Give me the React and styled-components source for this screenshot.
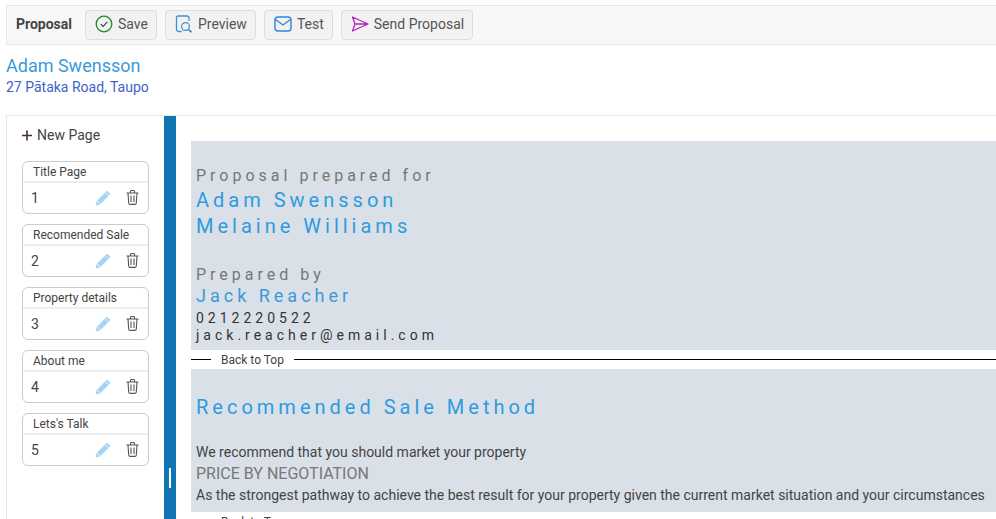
import React from "react";
import styled, { createGlobalStyle } from "styled-components";

const GlobalStyle = createGlobalStyle`
  html, body {
    margin: 0;
    padding: 0;
    background: #fff;
    overflow: hidden;
  }
  body {
    font-family: Roboto, "Liberation Sans", sans-serif;
    color: #333;
  }
`;

const Page = styled.div`
  width: 996px;
  height: 519px;
  overflow: hidden;
  padding: 5px 0 0 6px;
  box-sizing: border-box;
`;

const Toolbar = styled.div`
  display: flex;
  align-items: center;
  gap: 8px;
  width: 1010px;
  height: 40px;
  box-sizing: border-box;
  padding: 0 0 0 9px;
  background: #f8f8f8;
  border: 1px solid #e7e7e7;
`;

const ToolbarTitle = styled.span`
  font-size: 14px;
  font-weight: 700;
  color: #444;
  margin-right: 5px;
  padding-bottom: 2px;
`;

const ToolButton = styled.button`
  display: flex;
  align-items: center;
  gap: 5px;
  height: 30px;
  box-sizing: border-box;
  padding: 0 8px 2px 9px;
  background: #f2f2f2;
  border: 1px solid #ddd;
  border-radius: 4px;
  font-family: inherit;
  font-size: 14px;
  color: #555;
`;

const Client = styled.div`
  padding-top: 10px;
  height: 70px;
  box-sizing: border-box;
`;

const ClientName = styled.div`
  font-size: 18px;
  line-height: 22px;
  color: #3a9ad9;
`;

const ClientAddress = styled.div`
  font-size: 14px;
  line-height: 20px;
  color: #3f62c9;
`;

const Workspace = styled.div`
  display: flex;
  height: 420px;
  border-top: 1px solid #e7e7e7;
  border-left: 1px solid #e7e7e7;
`;

const Sidebar = styled.div`
  width: 157px;
  flex: none;
  box-sizing: border-box;
  padding: 9px 0 0 15px;
`;

const NewPage = styled.div`
  display: flex;
  align-items: center;
  gap: 4px;
  height: 20px;
  margin-left: -1px;
  font-size: 14px;
  color: #444;
  margin-bottom: 16px;
`;

const PageList = styled.div`
  display: flex;
  flex-direction: column;
  gap: 10px;
`;

const PageCard = styled.div`
  width: 127px;
  height: 53px;
  box-sizing: border-box;
  border: 1px solid #ccc;
  border-radius: 6px;
`;

const PageTitle = styled.div`
  height: 21px;
  box-sizing: border-box;
  padding-left: 10px;
  font-size: 12px;
  line-height: 20px;
  color: #444;
  border-bottom: 2px solid #eee;
`;

const PageRow = styled.div`
  display: flex;
  align-items: center;
  height: 29px;
  padding-left: 8px;
  font-size: 14px;
  color: #444;
`;

const PageNumber = styled.span`
  flex: 1;
`;

const PageActions = styled.div`
  display: flex;
  align-items: center;
  gap: 15px;
  padding-right: 9px;
`;

const Splitter = styled.div`
  position: relative;
  width: 12px;
  flex: none;
  background: #1075b0;
`;

const SplitterGrip = styled.div`
  position: absolute;
  top: 352px;
  left: 5px;
  width: 2px;
  height: 20px;
  background: #fff;
`;

const Content = styled.div`
  flex: 1;
  min-width: 0;
  padding-top: 25px;
  padding-left: 15px;
`;

const Panel = styled.div`
  background: #dae0e8;
  box-sizing: border-box;
  height: ${(p) => p.$height}px;
  padding: ${(p) => p.$top}px 0 0 5px;
`;

const SpacedLine = styled.div`
  font-size: ${(p) => p.$size}px;
  line-height: ${(p) => p.$line}px;
  letter-spacing: 4px;
  color: ${(p) => p.$color};
  margin-top: ${(p) => p.$gap || 0}px;
  white-space: nowrap;
`;

const BackToTop = styled.div`
  display: flex;
  align-items: center;
  height: 19px;
  font-size: 12px;
  color: #444;
  &::before {
    content: "";
    width: 20px;
    border-top: 1px solid #000;
    margin-right: 10px;
  }
  &::after {
    content: "";
    flex: 1;
    border-top: 1px solid #000;
    margin-left: 10px;
  }
`;

const BodyText = styled.div`
  font-size: 14px;
  line-height: 22px;
  color: #444;
  white-space: nowrap;
  margin-top: ${(p) => p.$gap || 0}px;
`;

const Emphasis = styled.div`
  font-size: 16px;
  line-height: 21px;
  color: #777;
`;

const CheckIcon = () => (
  <svg width="18" height="18" viewBox="0 0 18 18" fill="none">
    <circle cx="9" cy="9" r="7.8" stroke="#1a8a2a" strokeWidth="1.3" />
    <path d="M5.8 9.2l2.3 2.3 4.2-4.6" stroke="#333" strokeWidth="1.1" />
  </svg>
);

const PreviewIcon = () => (
  <svg width="18" height="18" viewBox="0 0 18 18" fill="none">
    <path d="M6.5 16.5H3.5a2 2 0 0 1-2-2v-12a1.5 1.5 0 0 1 1.5-1.5h9a2 2 0 0 1 2 2v3" stroke="#3b92d6" strokeWidth="1.3" />
    <circle cx="10.5" cy="11.5" r="3.9" stroke="#3b92d6" strokeWidth="1.2" />
    <path d="M13.5 14.5l3 2.8" stroke="#2b6f9c" strokeWidth="1.3" />
  </svg>
);

const MailIcon = () => (
  <svg width="18" height="16" viewBox="0 0 18 16" fill="none">
    <rect x="1" y="1" width="16" height="14" rx="3" stroke="#2f86d6" strokeWidth="1.4" />
    <path d="M1.5 3.5L9 9l7.5-5.5" stroke="#2f86d6" strokeWidth="1.4" />
  </svg>
);

const SendIcon = () => (
  <svg width="18" height="16" viewBox="0 0 18 16" fill="none">
    <path d="M1.5 1l15.5 7-15.5 7 2.5-7zM4 8h13" stroke="#b61fc0" strokeWidth="1.3" strokeLinejoin="round" />
  </svg>
);

const PlusIcon = () => (
  <svg width="12" height="12" viewBox="0 0 12 12">
    <path d="M1 6.5h10M6 1.5v10" stroke="#4a3030" strokeWidth="1.6" />
  </svg>
);

const PencilIcon = () => (
  <svg width="16" height="16" viewBox="0 0 15 15">
    <path d="M0.5 14.5l1-4.2L10.6 1.2a1 1 0 0 1 1.4 0l1.8 1.8a1 1 0 0 1 0 1.4L4.7 13.5z" fill="#a5d3f5" />
    <path d="M1.8 10l3.2 3.2M9.6 2.4l3 3" stroke="#fff" strokeWidth="0.7" />
  </svg>
);

const TrashIcon = () => (
  <svg width="13" height="15" viewBox="0 0 13 15" fill="none" stroke="#555" strokeWidth="1.1">
    <path d="M0.5 3h12M4.5 3V1.5a1 1 0 0 1 1-1h2a1 1 0 0 1 1 1V3" />
    <path d="M2 3l.7 10a1.5 1.5 0 0 0 1.5 1.4h4.6a1.5 1.5 0 0 0 1.5-1.4L11 3" />
    <path d="M5 5.5v6.5M8 5.5v6.5" />
  </svg>
);

const pages = ["Title Page", "Recomended Sale", "Property details", "About me", "Lets's Talk"];

const App = () => (
  <Page>
    <GlobalStyle />
    <Toolbar>
      <ToolbarTitle>Proposal</ToolbarTitle>
      <ToolButton>
        <CheckIcon />
        Save
      </ToolButton>
      <ToolButton>
        <PreviewIcon />
        Preview
      </ToolButton>
      <ToolButton>
        <MailIcon />
        Test
      </ToolButton>
      <ToolButton>
        <SendIcon />
        Send Proposal
      </ToolButton>
    </Toolbar>
    <Client>
      <ClientName>Adam Swensson</ClientName>
      <ClientAddress>27 Pātaka Road, Taupo</ClientAddress>
    </Client>
    <Workspace>
      <Sidebar>
        <NewPage>
          <PlusIcon />
          New Page
        </NewPage>
        <PageList>
          {pages.map((title, i) => (
            <PageCard key={title}>
              <PageTitle>{title}</PageTitle>
              <PageRow>
                <PageNumber>{i + 1}</PageNumber>
                <PageActions>
                  <PencilIcon />
                  <TrashIcon />
                </PageActions>
              </PageRow>
            </PageCard>
          ))}
        </PageList>
      </Sidebar>
      <Splitter>
        <SplitterGrip />
      </Splitter>
      <Content>
        <Panel $height={209} $top={25}>
          <SpacedLine $size={16} $line={20} $color="#777">Proposal prepared for</SpacedLine>
          <SpacedLine $size={20} $line={26} $color="#2f9ae0" $gap={1}>Adam Swensson</SpacedLine>
          <SpacedLine $size={20} $line={26} $color="#2f9ae0">Melaine Williams</SpacedLine>
          <SpacedLine $size={16} $line={20} $color="#777" $gap={26}>Prepared by</SpacedLine>
          <SpacedLine $size={18} $line={22} $color="#3a9ad9">Jack Reacher</SpacedLine>
          <SpacedLine $size={14} $line={18} $color="#333" $gap={2}>0212220522</SpacedLine>
          <SpacedLine $size={14} $line={18} $color="#333" $gap={-1}>jack.reacher@email.com</SpacedLine>
        </Panel>
        <BackToTop>Back to Top</BackToTop>
        <Panel $height={143} $top={24}>
          <SpacedLine $size={20} $line={28} $color="#2f9ae0">Recommended Sale Method</SpacedLine>
          <BodyText $gap={20}>We recommend that you should market your property</BodyText>
          <Emphasis>PRICE BY NEGOTIATION</Emphasis>
          <BodyText>As the strongest pathway to achieve the best result for your property given the current market situation and your circumstances</BodyText>
        </Panel>
        <BackToTop>Back to Top</BackToTop>
      </Content>
    </Workspace>
  </Page>
);

export default App;
